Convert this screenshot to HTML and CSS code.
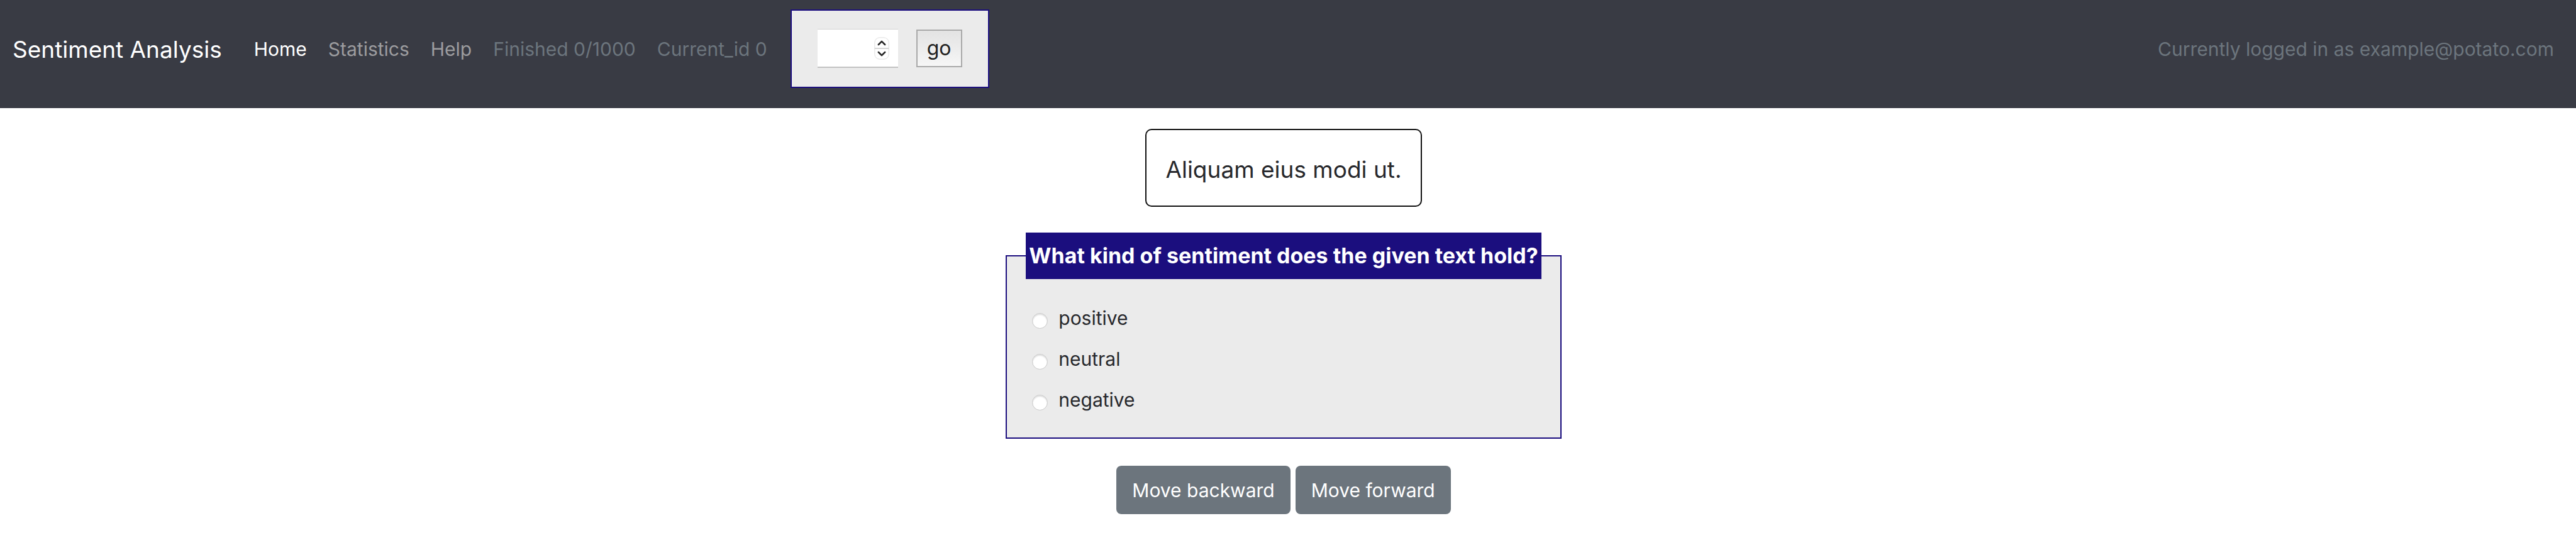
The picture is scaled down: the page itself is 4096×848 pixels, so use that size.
FILE: index.html
```html
<!DOCTYPE html>
<html lang="en">
<head>
<meta charset="utf-8">
<title>Sentiment Analysis</title>
<link rel="stylesheet" href="styles.css">
</head>
<body>
<nav class="navbar">
  <a class="brand" href="#">Sentiment Analysis</a>
  <div class="nav-links">
    <a class="nav-link active" href="#">Home</a>
    <a class="nav-link" href="#">Statistics</a>
    <a class="nav-link" href="#">Help</a>
    <span class="nav-link disabled">Finished 0/1000</span>
    <span class="nav-link disabled">Current_id 0</span>
  </div>
  <form class="go-form">
    <div class="number-field">
      <input class="number-input" type="number" aria-label="Go to id">
      <svg class="stepper" viewBox="0 0 28 42" aria-hidden="true">
        <rect x="1" y="1" width="26" height="40" rx="9" fill="#fff" stroke="#d8d8d8"/>
        <path d="M1 21H27" stroke="#d0d0d0" stroke-width="2"/>
        <path d="M8 14l6-6 6 6M8 28l6 6 6-6" fill="none" stroke="#262626" stroke-width="3" stroke-linecap="round" stroke-linejoin="round"/>
      </svg>
    </div>
    <button class="go-button" type="button">go</button>
  </form>
  <span class="nav-link disabled user">Currently logged in as example@potato.com</span>
</nav>
<main class="content">
  <div class="instance">Aliquam eius modi ut.</div>
  <form class="annotation">
    <fieldset class="question">
      <legend class="question-title">What kind of sentiment does the given text hold?</legend>
      <label class="option"><input class="radio" type="radio" name="sentiment"><span>positive</span></label>
      <label class="option"><input class="radio" type="radio" name="sentiment"><span>neutral</span></label>
      <label class="option"><input class="radio" type="radio" name="sentiment"><span>negative</span></label>
    </fieldset>
    <div class="actions">
      <button class="btn" type="button">Move backward</button>
      <button class="btn" type="button">Move forward</button>
    </div>
  </form>
</main>
</body>
</html>
```
FILE: styles.css
```css
* {
  box-sizing: border-box;
}

body {
  margin: 0;
  background: #fff;
  color: #27282c;
  font-family: Inter, "Liberation Sans", sans-serif;
  font-size: 30px;
  line-height: 48px;
}

.navbar {
  display: flex;
  align-items: flex-start;
  padding: 15px 18px 32px 20px;
  background: #393b44;
}

.brand {
  margin: 40px 34px 0 0;
  color: #fff;
  font-size: 37px;
  text-decoration: none;
}

.nav-links {
  display: flex;
}

.nav-link {
  margin-top: 39px;
  padding: 0 17px;
  color: #9c9c9f;
  text-decoration: none;
  white-space: nowrap;
}

.active {
  color: #fff;
}

.disabled {
  color: #6c757d;
}

.user {
  margin-left: auto;
}

.go-form {
  display: flex;
  align-items: center;
  gap: 29px;
  margin-left: 20px;
  padding: 29px 41px 30px;
  background: #ebebeb;
  border: 2px solid #1b0e7e;
}

.number-field {
  position: relative;
  display: flex;
}

.number-input {
  width: 128px;
  height: 62px;
  padding: 0 40px 0 8px;
  background: #fff;
  border: 0;
  border-top: 1px solid #d4d4d4;
  border-bottom: 2px solid #c1c1c1;
  font: inherit;
  appearance: textfield;
}

.number-input::-webkit-inner-spin-button {
  appearance: none;
}

.stepper {
  position: absolute;
  top: 13px;
  right: 14px;
  width: 24px;
  height: 36px;
  overflow: visible;
}

.go-button {
  padding: 4px 15px;
  background: linear-gradient(#e3e3e3, #f6f6f6);
  border: 2px solid #a9a9a9;
  color: #222;
  font: inherit;
  font-size: 32px;
  line-height: 48px;
}

.content {
  display: flex;
  flex-direction: column;
  align-items: center;
  padding: 33px 14px 30px 0;
}

.instance {
  padding: 39px 30px 33px;
  border: 2px solid #111;
  border-radius: 10px;
  font-size: 37px;
}

.annotation {
  display: flex;
  flex-direction: column;
  align-items: center;
  margin-top: 41px;
}

.question {
  margin: 0;
  padding: 38px 30px 19px;
  background: #ebebeb;
  border: 2px solid #1b0e7e;
}

.question-title {
  padding: 13px 5px;
  background: #1b0e7e;
  color: #fff;
  font-size: 34px;
  font-weight: 700;
}

.option {
  display: flex;
  align-items: center;
  gap: 17px;
  margin-left: 10px;
  padding-bottom: 17px;
}

.radio {
  appearance: none;
  width: 25px;
  height: 25px;
  margin: 8px 0 0;
  background: #fff;
  border: 1px solid #c9c9c9;
  border-radius: 50%;
  box-shadow: inset 0 2px 2px #dedede;
}

.actions {
  display: flex;
  gap: 8px;
  margin-top: 43px;
}

.btn {
  padding: 15px 25px 14px;
  background: #6c757d;
  border: 0;
  border-radius: 8px;
  color: #fff;
  font: inherit;
}
```
